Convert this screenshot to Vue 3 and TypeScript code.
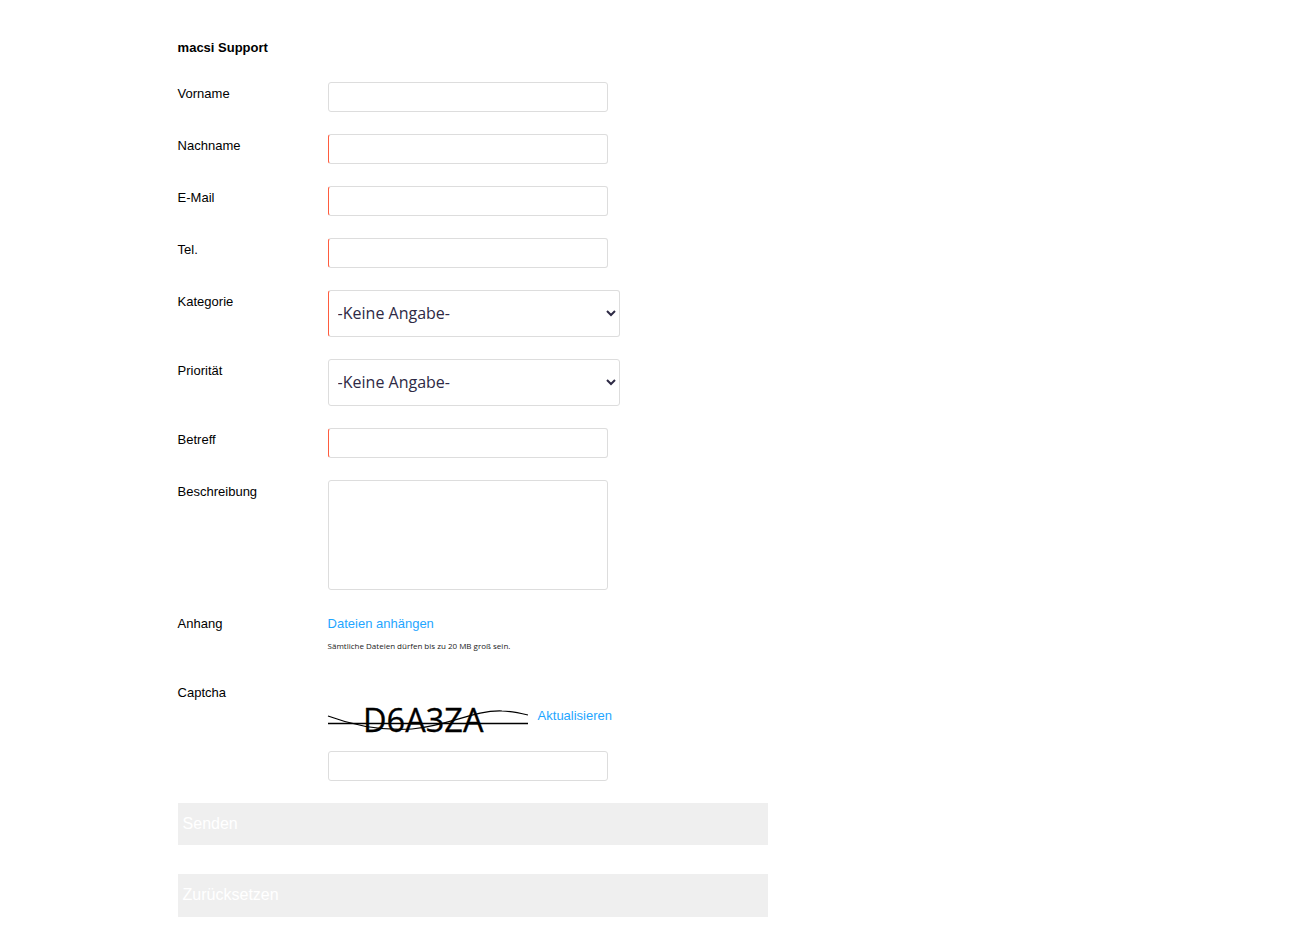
<script setup lang="ts">
interface Field {
  label: string
  required: boolean
  kind: 'input' | 'select' | 'textarea'
}

const fields: Field[] = [
  { label: 'Vorname', required: false, kind: 'input' },
  { label: 'Nachname', required: true, kind: 'input' },
  { label: 'E-Mail', required: true, kind: 'input' },
  { label: 'Tel.', required: true, kind: 'input' },
  { label: 'Kategorie', required: true, kind: 'select' },
  { label: 'Priorität', required: false, kind: 'select' },
  { label: 'Betreff', required: true, kind: 'input' },
  { label: 'Beschreibung', required: false, kind: 'textarea' },
]
</script>

<template>
  <form class="form" @submit.prevent>
    <div class="title">macsi Support</div>

    <div v-for="field in fields" :key="field.label" class="row">
      <label class="label">{{ field.label }}</label>
      <div class="control">
        <input v-if="field.kind === 'input'" type="text" :class="['box', { required: field.required }]" />
        <select v-else-if="field.kind === 'select'" :class="['box', 'pick', { required: field.required }]">
          <option>-Keine Angabe-</option>
        </select>
        <textarea v-else class="box area"></textarea>
      </div>
    </div>

    <div class="row attach">
      <label class="label">Anhang</label>
      <div class="control">
        <a class="link" href="#">Dateien anhängen</a>
        <div class="hint">Sämtliche Dateien dürfen bis zu 20 MB groß sein.</div>
      </div>
    </div>

    <div class="row captcha">
      <label class="label">Captcha</label>
      <div class="control">
        <div class="captcha-line">
          <svg class="captcha-img" width="200" height="40" viewBox="0 0 200 40">
            <text x="35" y="37" class="captcha-text">D6A3ZA</text>
            <path d="M0 28.5H200" stroke="#000" stroke-width="1.4" fill="none" />
            <path d="M0 21C24 30 52 36 84 34C120 31 146 15 174 16C184 16 192 18 200 20" stroke="#000" stroke-width="1.2" fill="none" />
          </svg>
          <a class="link" href="#">Aktualisieren</a>
        </div>
        <input type="text" class="box" />
      </div>
    </div>

    <button type="button" class="btn">Senden</button>
    <button type="button" class="btn second">Zurücksetzen</button>
  </form>
</template>

<style>
body {
  background: #fff;
}
</style>

<style scoped>
.form {
  width: 590px;
  margin-left: 177.6px;
  padding-top: 40px;
  font-family: 'Liberation Sans', Arial, sans-serif;
  font-size: 13px;
  color: #000;
}

.title {
  font-weight: 700;
  line-height: 15px;
  margin-bottom: 27px;
}

.row {
  display: flex;
  margin-bottom: 22px;
}

.label {
  width: 150px;
  flex: none;
  padding-top: 4px;
  line-height: 15px;
}

.control {
  flex: 1;
  min-width: 0;
}

.box {
  display: block;
  box-sizing: border-box;
  width: 280px;
  height: 30px;
  padding: 0 8px;
  margin: 0;
  background: #fff;
  border: 1px solid #ddd;
  border-radius: 3px;
  outline: none;
}

.required {
  border-left: 1px solid #ff5c3e;
}

.pick {
  width: 292px;
  height: 47px;
  padding: 0 5px 2px;
  font-family: 'Open Sans', sans-serif;
  font-size: 16px;
  color: #2e2a45;
}

.area {
  height: 110px;
  resize: none;
}

.attach {
  margin-bottom: 34px;
}

.link {
  color: #1fa6ff;
  text-decoration: none;
  line-height: 15px;
}

.attach .link {
  display: block;
  padding-top: 4px;
}

.hint {
  margin-top: 9px;
  font-family: 'Open Sans', sans-serif;
  font-size: 8px;
  line-height: 11px;
  color: #1a1a1a;
}

.captcha .label {
  padding-top: 0;
}

.captcha-line {
  display: flex;
  align-items: center;
  gap: 10px;
  height: 40px;
  margin: 10px 0 16px;
}

.captcha-img {
  display: block;
  flex: none;
  overflow: visible;
}

.captcha-text {
  font-family: 'Open Sans', sans-serif;
  font-size: 32.5px;
  fill: #000;
  stroke: #000;
  stroke-width: 0.3px;
}

.btn {
  display: block;
  width: 590px;
  height: 42px;
  padding: 0 5px;
  border: none;
  background: #efefef;
  color: #fff;
  font-family: 'Liberation Sans', Arial, sans-serif;
  font-size: 16px;
  text-align: left;
}

.second {
  height: 43px;
  margin-top: 29px;
  padding-bottom: 2px;
}
</style>
